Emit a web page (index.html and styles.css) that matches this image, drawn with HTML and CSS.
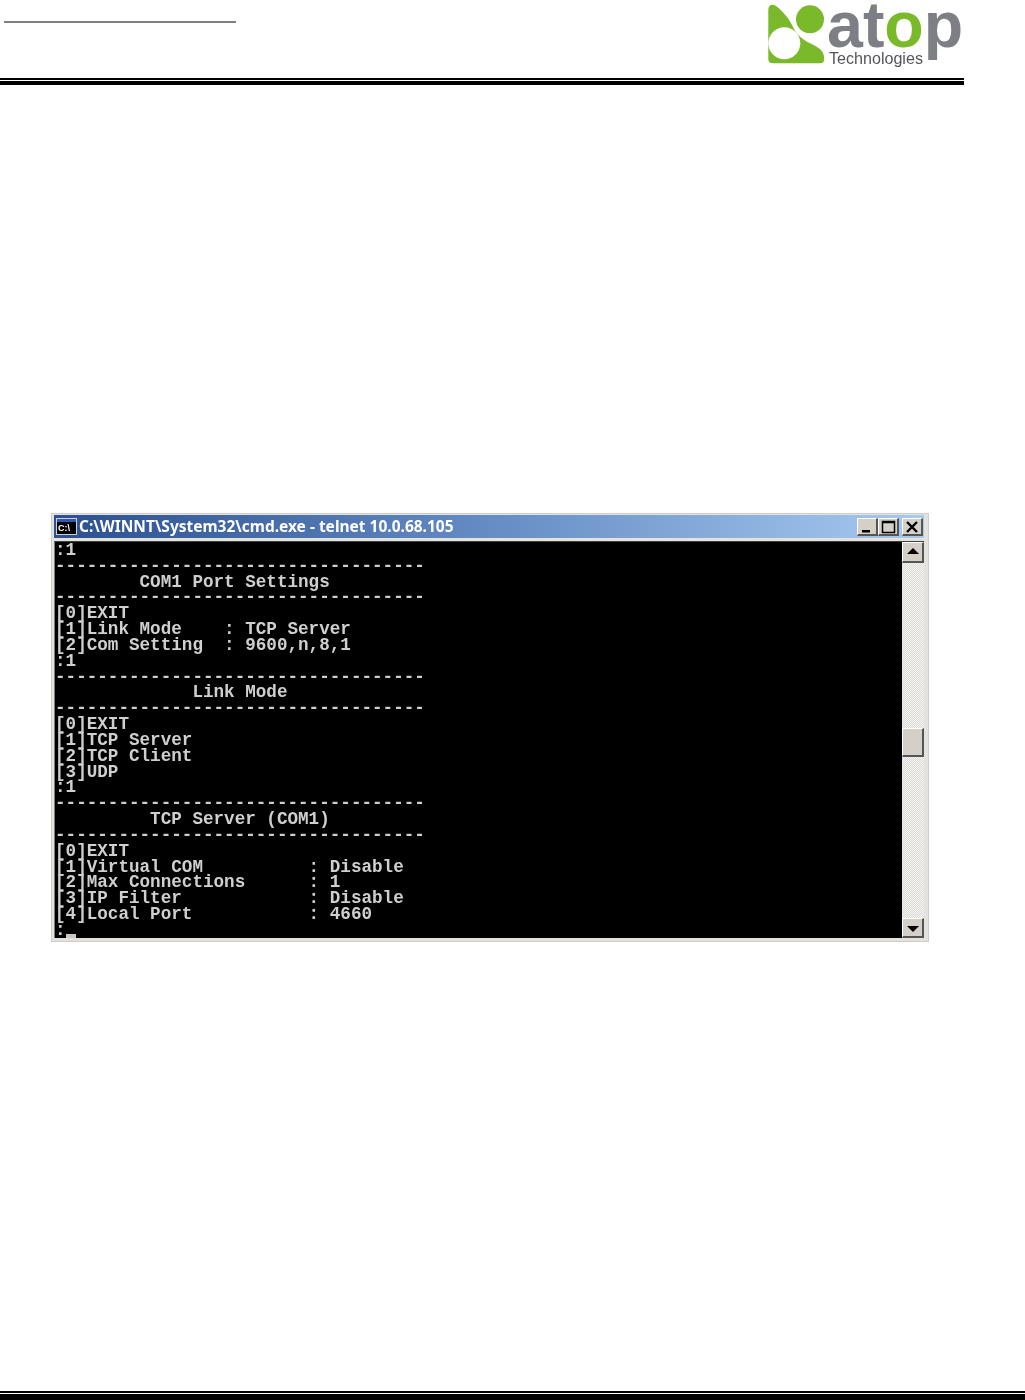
FILE: index.html
```html
<!DOCTYPE html>
<html lang="en">
<head>
<meta charset="utf-8">
<title>Telnet console</title>
<link rel="stylesheet" href="styles.css">
</head>
<body>
<div class="page">
  <header class="header">
    <div class="header-top">
      <div class="doc-title-rule"></div>
      <svg class="logo" width="200" height="70" viewBox="0 0 200 70" aria-label="atop Technologies">
        <path class="logo-green" d="M1.300 10C1.300 5 5 3.500 9 6C16 11 23 20 26 27C29 34 34 38 40 41.700C48 46 57 49 57 57V60C57 62 56 63.300 53 63.300H6C3 63.300 1.300 62 1.300 59Z"/>
        <circle class="logo-hole" cx="17.300" cy="43.300" r="16"/>
        <circle class="logo-green" cx="43" cy="19.300" r="14"/>
        <text class="logo-word" x="60" y="47">a<tspan class="logo-t">t</tspan><tspan class="logo-o">o</tspan>p</text>
        <text class="logo-sub" x="62" y="63.500">Technologies</text>
      </svg>
    </div>
    <div class="rule-thin"></div>
    <div class="rule-thick"></div>
  </header>

  <main class="window">
    <div class="titlebar">
      <svg class="cmd-icon" width="21" height="17" viewBox="0 0 21 17">
        <rect width="21" height="17" fill="#d4d0c8"/>
        <rect x="1" y="1" width="19" height="15" fill="#000"/>
        <rect x="1" y="1" width="19" height="3" fill="#2a5ac0"/>
        <text class="cmd-icon-text" x="2" y="13">C:\</text>
      </svg>
      <span class="title-text">C:\WINNT\System32\cmd.exe - telnet 10.0.68.105</span>
      <div class="title-buttons">
        <span class="tbtn"><svg width="21" height="18" viewBox="0 0 21 18"><rect x="5" y="12" width="8" height="2.500" fill="#000"/></svg></span>
        <span class="tbtn"><svg width="21" height="18" viewBox="0 0 21 18"><path d="M4.500 3.500H16.500V14.500H4.500Z M4.500 4.500H16.500" fill="none" stroke="#000" stroke-width="1.500"/></svg></span>
        <span class="tbtn tbtn-close"><svg width="21" height="18" viewBox="0 0 21 18"><path d="M5 4L15 14M15 4L5 14" fill="none" stroke="#000" stroke-width="2.400"/></svg></span>
      </div>
    </div>
    <div class="client">
<pre class="console">:1
-----------------------------------
        COM1 Port Settings
-----------------------------------
[0]EXIT
[1]Link Mode    : TCP Server
[2]Com Setting  : 9600,n,8,1
:1
-----------------------------------
             Link Mode
-----------------------------------
[0]EXIT
[1]TCP Server
[2]TCP Client
[3]UDP
:1
-----------------------------------
         TCP Server (COM1)
-----------------------------------
[0]EXIT
[1]Virtual COM          : Disable
[2]Max Connections      : 1
[3]IP Filter            : Disable
[4]Local Port           : 4660
:<span class="cursor"></span></pre>
      <div class="scrollbar">
        <span class="sbtn sbtn-up"><svg width="22" height="20" viewBox="0 0 22 20"><path d="M11 6L17 12H5Z" fill="#000"/></svg></span>
        <div class="track track-before"></div>
        <div class="thumb"></div>
        <div class="track track-after"></div>
        <span class="sbtn"><svg width="22" height="20" viewBox="0 0 22 20"><path d="M5 8H17L11 14Z" fill="#000"/></svg></span>
      </div>
    </div>
  </main>

  <footer class="footer">
    <div class="rule-thin"></div>
    <div class="rule-thick-bottom"></div>
  </footer>
</div>
</body>
</html>
```
FILE: styles.css
```css
html, body {
  margin: 0;
  padding: 0;
  background: #fff;
}

.page {
  display: flex;
  flex-direction: column;
  height: 1400px;
  overflow: hidden;
}

.header {
  width: 964px;
}

.header-top {
  display: flex;
  justify-content: space-between;
  align-items: flex-start;
  height: 78px;
}

.doc-title-rule {
  width: 232px;
  height: 2px;
  margin: 21px 0 0 4px;
  background: #808080;
}

.logo {
  margin: 0 -3px 0 0;
  overflow: visible;
  filter: blur(0.4px);
}

.logo-green { fill: #7ab929; }
.logo-hole { fill: #fff; }

.logo-word {
  font: bold 64.500px "Liberation Sans", sans-serif;
  fill: #7d7f85;
}

.logo-o { fill: #7ab929; }

.logo-sub {
  font: 16.100px "Liberation Sans", sans-serif;
  fill: #55565a;
}

.rule-thin {
  height: 2px;
  background: #000;
}

.rule-thick {
  height: 4px;
  margin-top: 1px;
  background: #000;
}

.window {
  box-sizing: border-box;
  width: 878px;
  height: 429px;
  margin: 428px 0 0 51px;
  padding: 1px 4px 4px 2px;
  background: #e4e2dc;
  border: 1px solid #cfcdc6;
  filter: blur(0.35px);
}

.titlebar {
  display: flex;
  align-items: center;
  height: 23px;
  padding: 0 0 0 2px;
  background: linear-gradient(90deg, #2b4f90 0%, #5f86bf 45%, #a6caf0 100%);
}

.cmd-icon {
  flex: none;
}

.cmd-icon-text {
  font: bold 9px "Liberation Sans", sans-serif;
  fill: #fff;
}

.title-text {
  margin: 0 0 2px 2px;
  font: bold 15.500px "Noto Sans", sans-serif;
  color: #fff;
  white-space: nowrap;
}

.title-buttons {
  display: flex;
  gap: 0;
  margin-left: auto;
  margin-right: 1px;
}

.tbtn,
.sbtn {
  display: block;
  box-sizing: border-box;
  background: #d4d0c8;
  border-style: solid;
  border-width: 1px 2px 2px 1px;
  border-color: #fff #555 #555 #fff;
}

.tbtn {
  width: 21px;
  height: 18px;
}

.tbtn svg {
  display: block;
  margin: -1px 0 0 -1px;
}

.tbtn-close {
  margin-left: 3px;
}

.client {
  display: flex;
  height: 396px;
  margin-top: 3px;
  border-top: 1px solid #404040;
  border-left: 1px solid #808080;
}

.console {
  flex: 1;
  margin: 0;
  padding: 1px 0 0 0;
  background: #000;
  color: #cfcfcf;
  font: bold 17.630px/15.83px "Liberation Mono", monospace;
  overflow: hidden;
}

.cursor {
  display: inline-block;
  width: 10px;
  height: 4px;
  background: #c8c8c8;
  vertical-align: -3px;
}

.scrollbar {
  flex: none;
  display: flex;
  flex-direction: column;
  width: 22px;
  background-color: #eeeeee;
  background-image: repeating-conic-gradient(#dcdad4 0 25%, #f4f4f2 0 50%);
  background-size: 2px 2px;
}

.sbtn {
  flex: none;
  height: 20px;
}

.sbtn-up {
  height: 21px;
}

.sbtn svg {
  display: block;
  margin: -1px 0 0 -1px;
}

.track-before { height: 165px; }
.track-after { flex: 1; }

.thumb {
  box-sizing: border-box;
  height: 29px;
  background: #d4d0c8;
  border-style: solid;
  border-width: 1px 2px 2px 1px;
  border-color: #fff #555 #555 #fff;
}

.footer {
  margin-top: auto;
}

.rule-thick-bottom {
  height: 6px;
  margin-top: 1px;
  background: #000;
}
```
